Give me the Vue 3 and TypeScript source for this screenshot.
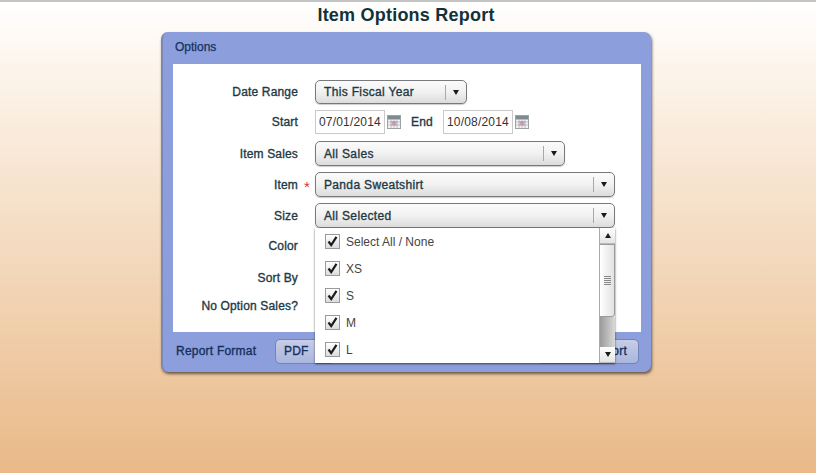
<script setup lang="ts">
interface Row { label: string; value: string; width: number; req?: boolean }
const checks: string[] = ['Select All / None', 'XS', 'S', 'M', 'L']
const itemRows: Row[] = [
  { label: 'Item', value: 'Panda Sweatshirt', width: 300, req: true },
  { label: 'Size', value: 'All Selected', width: 300 },
]
const blank: { label: string; cls: string }[] = [
  { label: 'Color', cls: 'r-color' },
  { label: 'Sort By', cls: 'r-sort' },
  { label: 'No Option Sales?', cls: 'r-noopt' },
]
const calCols = [0, 1, 2]
</script>

<template>
  <div class="page">
    <h1 class="title">Item Options Report</h1>
    <div class="panel">
      <div class="panel-head">Options</div>
      <div class="panel-body">
        <div class="row r-range">
          <label class="lbl">Date Range</label>
          <div class="sel" style="width: 152px"><span class="sel-text">This Fiscal Year</span><span class="sel-btn"><i class="tri"></i></span></div>
        </div>
        <div class="row r-dates">
          <label class="lbl">Start</label>
          <div class="date">07/01/2014</div>
          <svg class="cal" viewBox="0 0 14 14" width="14" height="14">
            <rect x="0.5" y="0.5" width="13" height="13" fill="#f4f4f4" stroke="#9aa2a6" />
            <rect x="1" y="1" width="12" height="3.5" fill="#7d8c94" />
            <rect x="4.5" y="6" width="5" height="4.5" fill="#f28fb0" />
            <path v-for="c in calCols" :key="c" :d="`M${4 + c * 3} 4.5V13`" stroke="#a0a5aa" stroke-width="0.7" />
            <path d="M1 7H13M1 10H13" stroke="#a0a5aa" stroke-width="0.7" />
          </svg>
          <span class="end-lbl">End</span>
          <div class="date">10/08/2014</div>
          <svg class="cal" viewBox="0 0 14 14" width="14" height="14">
            <rect x="0.5" y="0.5" width="13" height="13" fill="#f4f4f4" stroke="#9aa2a6" />
            <rect x="1" y="1" width="12" height="3.5" fill="#7d8c94" />
            <rect x="4.5" y="6" width="5" height="4.5" fill="#f28fb0" />
            <path v-for="c in calCols" :key="c" :d="`M${4 + c * 3} 4.5V13`" stroke="#a0a5aa" stroke-width="0.7" />
            <path d="M1 7H13M1 10H13" stroke="#a0a5aa" stroke-width="0.7" />
          </svg>
        </div>
        <div class="row r-sales">
          <label class="lbl">Item Sales</label>
          <div class="sel" style="width: 250px"><span class="sel-text">All Sales</span><span class="sel-btn"><i class="tri"></i></span></div>
        </div>
        <div v-for="r in itemRows" :key="r.label" class="row r-item">
          <label class="lbl">{{ r.label }}<span v-if="r.req" class="req">*</span></label>
          <div class="sel" :style="{ width: r.width + 'px' }"><span class="sel-text">{{ r.value }}</span><span class="sel-btn"><i class="tri"></i></span></div>
        </div>
        <div v-for="b in blank" :key="b.label" class="row" :class="b.cls">
          <label class="lbl">{{ b.label }}</label>
        </div>
      </div>
      <div class="panel-foot">
        <span class="fmt">Report Format</span>
        <div class="btn pdf">PDF</div>
        <div class="btn run">Run Report</div>
      </div>

      <div class="drop">
        <div class="drop-list">
          <div v-for="c in checks" :key="c" class="opt">
            <span class="box">
              <svg viewBox="0 0 15 15" width="15" height="15"><path d="M3.5 7.5 L6.2 11 L11.5 2.8" fill="none" stroke="#1c1c1c" stroke-width="2.2" /></svg>
            </span>
            <span class="opt-text">{{ c }}</span>
          </div>
        </div>
        <div class="scroll">
          <div class="sb-btn"><i class="tri up"></i></div>
          <div class="thumb"><span class="grip"></span></div>
          <div class="track"></div>
          <div class="sb-btn"><i class="tri"></i></div>
        </div>
      </div>
    </div>
  </div>
</template>

<style>
html, body { margin: 0; padding: 0; }
</style>

<style scoped>
.page {
  width: 816px;
  height: 473px;
  box-sizing: border-box;
  overflow: hidden;
  border-top: 2px solid #c4c4c4;
  background: linear-gradient(to bottom, #ffffff 0%, #fdf6ee 12%, #e9b987 100%);
  font-family: "Liberation Sans", Arial, sans-serif;
  color: #1d3a44;
}
.title {
  margin: 0;
  height: 30px;
  padding: 3px 4px 0 0;
  box-sizing: border-box;
  text-align: center;
  font-size: 18px;
  line-height: 21px;
  font-weight: bold;
  letter-spacing: 0.22px;
  color: #11323a;
}
.panel {
  position: relative;
  width: 490px;
  height: 340px;
  margin-left: 161px;
  box-sizing: border-box;
  background: #8c9fdc;
  border-radius: 7px;
  border-left: 2px solid #7a88b8;
  box-shadow: 1px 2px 3px rgba(60, 50, 40, 0.75);
  display: flex;
  flex-direction: column;
}
.panel-head {
  height: 32px;
  box-sizing: border-box;
  padding: 8px 0 0 12px;
  font-size: 12px;
  line-height: 14px;
  color: #15305c;
  -webkit-text-stroke: 0.25px #15305c;
}
.panel-body {
  width: 468px;
  height: 268px;
  margin-left: 10px;
  box-sizing: border-box;
  padding-top: 16px;
  background: #fff;
}
.row { display: flex; align-items: center; }
.lbl {
  position: relative;
  display: block;
  width: 125px;
  flex: none;
  margin-right: 17px;
  text-align: right;
  font-size: 12px;
  line-height: 14px;
  letter-spacing: 0.16px;
  color: #1d3a44;
  -webkit-text-stroke: 0.35px #1d3a44;
}
.r-range { height: 24px; }
.r-dates { height: 24px; margin-top: 6px; }
.r-sales { height: 25px; margin-top: 7px; }
.r-item { height: 25px; margin-top: 6px; }
.r-color { height: 14px; margin-top: 11px; }
.r-sort { height: 14px; margin-top: 18px; }
.r-noopt { height: 14px; margin-top: 14px; }
.req {
  position: absolute;
  left: 131px;
  top: 2px;
  color: #d8333a;
  font-size: 15px;
  font-weight: normal;
  -webkit-text-stroke: 0;
}
.sel {
  height: 100%;
  box-sizing: border-box;
  flex: none;
  display: flex;
  align-items: center;
  justify-content: space-between;
  border: 1px solid #77797c;
  border-radius: 5px;
  background: linear-gradient(to bottom, #fbfbfb 0%, #f1f1f1 50%, #dcdcdc 100%);
  box-shadow: 0 1px 1px rgba(0, 0, 0, 0.2);
}
.sel-text {
  padding-left: 8px;
  font-size: 12px;
  letter-spacing: 0.34px;
  color: #1d3a44;
  -webkit-text-stroke: 0.35px #1d3a44;
}
.sel-btn {
  width: 20px;
  height: 15px;
  border-left: 1px solid #a9a9a9;
  display: flex;
  align-items: center;
  justify-content: center;
}
.tri {
  display: block;
  width: 0;
  height: 0;
  border-left: 3.5px solid transparent;
  border-right: 3.5px solid transparent;
  border-top: 5px solid #1a1a1a;
}
.tri.up { border-top: 0; border-bottom: 5px solid #1a1a1a; }
.date {
  width: 70px;
  height: 24px;
  box-sizing: border-box;
  flex: none;
  border: 1px solid #c9c9c9;
  font-size: 12px;
  line-height: 22px;
  padding-left: 3px;
  letter-spacing: 0.18px;
  color: #333;
}
.cal { flex: none; margin-left: 2px; }
.end-lbl {
  width: 20px;
  margin: 0 12px 0 10px;
  font-size: 12px;
  letter-spacing: 0.16px;
  color: #1d3a44;
  -webkit-text-stroke: 0.35px #1d3a44;
}
.panel-foot {
  height: 40px;
  display: flex;
  align-items: flex-start;
  position: relative;
}
.fmt {
  margin: 12px 0 0 13px;
  font-size: 12px;
  line-height: 14px;
  letter-spacing: 0.22px;
  color: #16305e;
  -webkit-text-stroke: 0.35px #16305e;
}
.btn {
  position: absolute;
  top: 7px;
  height: 25px;
  box-sizing: border-box;
  border: 1px solid #7283b8;
  border-radius: 5px;
  background: linear-gradient(to bottom, #c6cde6 0%, #aab6de 100%);
  font-size: 12px;
  line-height: 23px;
  letter-spacing: 0.22px;
  color: #16305e;
  -webkit-text-stroke: 0.35px #16305e;
  white-space: nowrap;
}
.pdf { left: 112px; width: 60px; padding-left: 8px; }
.run { right: 12px; width: 102px; text-align: right; padding-right: 11px; }
.drop {
  position: absolute;
  left: 152px;
  top: 196px;
  width: 300px;
  height: 135px;
  display: flex;
  background: #fff;
  box-shadow: 0 1px 2px rgba(0, 0, 0, 0.6);
  z-index: 2;
}
.drop-list {
  flex: 1;
}
.opt {
  height: 27px;
  display: flex;
  align-items: center;
  padding-left: 10px;
}
.box {
  width: 15px;
  height: 15px;
  box-sizing: border-box;
  flex: none;
  border: 1px solid #9a9a9a;
  background: linear-gradient(to bottom, #fff, #dcdcdc);
  display: flex;
  align-items: center;
  justify-content: center;
  overflow: hidden;
}
.box svg { flex: none; }
.opt-text {
  margin-left: 6px;
  font-size: 12px;
  color: #444;
}
.scroll {
  width: 16px;
  flex: none;
  display: flex;
  flex-direction: column;
  border-left: 1px solid #aaa;
  box-sizing: border-box;
}
.sb-btn {
  height: 16px;
  flex: none;
  display: flex;
  align-items: center;
  justify-content: center;
  background: linear-gradient(to bottom, #fff, #e4e4e4);
  border-bottom: 1px solid #bbb;
  box-sizing: border-box;
}
.thumb {
  height: 73px;
  flex: none;
  box-sizing: border-box;
  border: 1px solid #9a9a9a;
  border-left: 0;
  border-radius: 0 0 3px 0;
  background: linear-gradient(to right, #fff, #e2e2e2);
  display: flex;
  align-items: center;
  justify-content: center;
}
.grip {
  width: 7px;
  height: 9px;
  background: repeating-linear-gradient(to bottom, #888 0, #888 1px, transparent 1px, transparent 2px);
}
.track {
  flex: 1;
  background: linear-gradient(to right, #9a9a9a, #d9d9d9);
}
</style>
